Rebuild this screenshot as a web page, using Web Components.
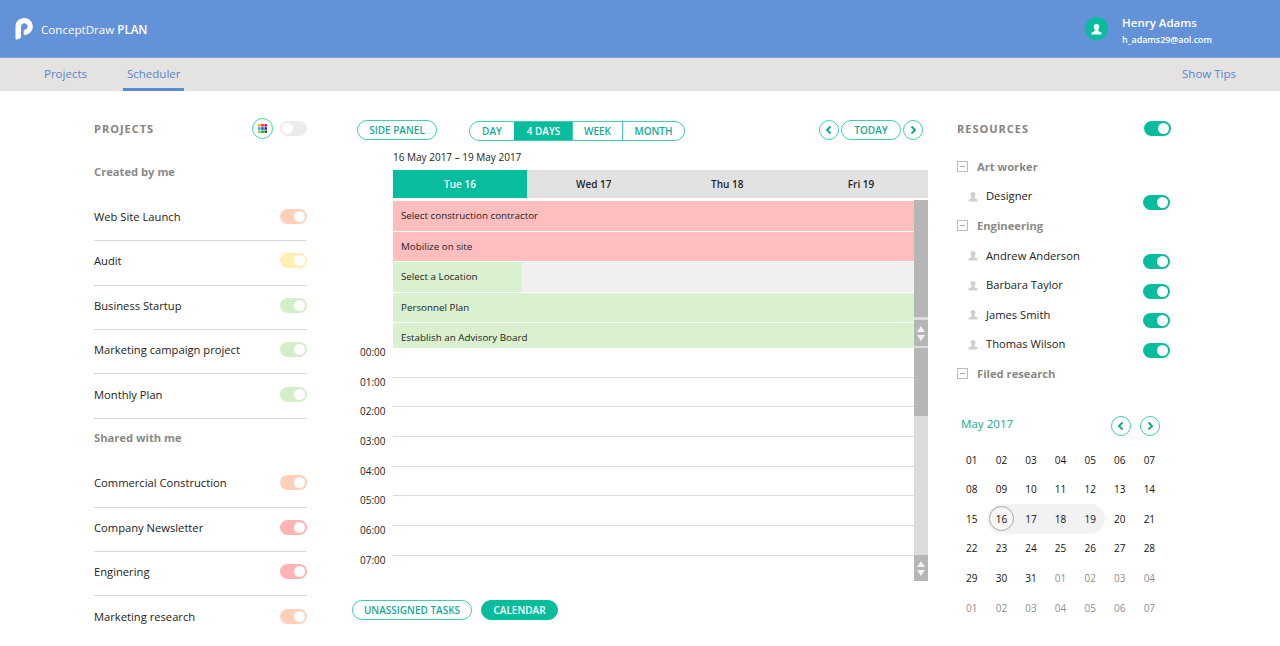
<!DOCTYPE html>
<html lang="en">
<head>
<meta charset="utf-8">
<title>ConceptDraw PLAN</title>
<style>
    html, body { margin: 0; height: 100%; overflow: hidden; background: #fff; }
    body { font-family: "Open Sans", "Liberation Sans", sans-serif; color: #222; }
</style>
</head>
<body>
<app-header></app-header>
<app-nav></app-nav>
<app-main>
    <project-panel></project-panel>
    <scheduler-view></scheduler-view>
    <resource-panel></resource-panel>
</app-main>

<script>
const TEAL = '#08bc9e';
const PERSON = '<path d="M6 0.500c-1.900 0-3 1.400-3 3.200 0 1.300.5 2.300 1.200 3v1.200C3.900 8.600 1 9 .6 10.200V12h10.800v-1.800C11 9 8.100 8.600 7.800 7.900V6.700c.7-.7 1.200-1.700 1.200-3 0-1.800-1.100-3.200-3-3.200z"/>';

class ToggleSwitch extends HTMLElement {
    constructor() {
        super();
        this.attachShadow({ mode: 'open' });
        this.shadowRoot.innerHTML = `
            <style>
                :host { display: inline-block; width: 27px; height: 15px; flex: none; border-radius: 8px; background: var(--on, #eee); position: relative; }
                i { position: absolute; top: 2px; right: 2px; width: 11px; height: 11px; border-radius: 50%; background: #fff; }
                :host([off]) i { right: auto; left: 2px; }
            </style>
            <i></i>`;
        if (this.hasAttribute('color')) this.style.setProperty('--on', this.getAttribute('color'));
    }
}
customElements.define('toggle-switch', ToggleSwitch);

class PillButton extends HTMLElement {
    constructor() {
        super();
        this.attachShadow({ mode: 'open' });
        this.shadowRoot.innerHTML = `
            <style>
                :host { display: inline-flex; align-items: center; justify-content: center; box-sizing: border-box; height: 20px; border: 1px solid #3fcdb5; border-radius: 10px; font: 600 10px "Open Sans", sans-serif; color: #12ab92; background: #fff; }
                :host([active]) { background: ${TEAL}; border-color: ${TEAL}; color: #fff; }
            </style>
            <slot></slot>`;
    }
}
customElements.define('pill-button', PillButton);

class RoundArrow extends HTMLElement {
    constructor() {
        super();
        this.attachShadow({ mode: 'open' });
        const d = this.getAttribute('dir') === 'next' ? 'M8.500 6.500l3.500 3.500-3.500 3.500' : 'M11.500 6.500L8 10l3.500 3.500';
        this.shadowRoot.innerHTML = `
            <style>
                :host { display: block; width: 20px; height: 20px; flex: none; }
                svg { display: block; }
            </style>
            <svg width="20" height="20" viewBox="0 0 20 20" fill="none">
                <circle cx="10" cy="10" r="9.500" stroke="#3fcdb5"/>
                <path d="${d}" stroke="#0aa88e" stroke-width="1.800"/>
            </svg>`;
    }
}
customElements.define('round-arrow', RoundArrow);

class AppHeader extends HTMLElement {
    constructor() {
        super();
        this.attachShadow({ mode: 'open' });
        this.shadowRoot.innerHTML = `
            <style>
                :host { display: flex; align-items: center; height: 58px; box-sizing: border-box; background: #6492d8; border-bottom: 1px solid #7fa5de; color: #fff; padding: 0 68px 0 15px; }
                .logo { display: block; margin-right: 8px; }
                .name { font-size: 11.600px; flex: 1; margin-top: 2px; }
                .name b { font-weight: 600; }
                .avatar { width: 23px; height: 23px; border-radius: 50%; background: ${TEAL}; display: flex; align-items: center; justify-content: center; margin-right: 14px; }
                .user { display: flex; flex-direction: column; margin-top: 5px; }
                .user b { font-weight: 600; font-size: 11.500px; line-height: 15px; }
                .user span { font-size: 8.900px; font-weight: 600; line-height: 16px; margin-top: 2px; }
            </style>
            <svg class="logo" width="18" height="22" viewBox="0 0 18 22">
                <path fill="#fff" d="M9.500 0C4 0 .5 3.500.5 9v11.500c0 .8.700 1.300 1.500 1 2.300-.4 4-1.200 4-3V9.300C6 7 7.300 5.300 9.300 5.300c1.900 0 3.200 1.400 3.200 3.200 0 1.700-1.100 3-2.700 3.300-.7.100-1.100.6-1.100 1.300v2.900c0 .8.500 1.100 1.200 1 4.500-.7 7.900-3.900 7.900-8.300C17.800 3.500 14.300 0 9.500 0z"/>
            </svg>
            <span class="name">ConceptDraw <b>PLAN</b></span>
            <span class="avatar"><svg width="11" height="12" viewBox="0 0 12 12" fill="#fff">${PERSON}</svg></span>
            <span class="user"><b>Henry Adams</b><span>h_adams29@aol.com</span></span>`;
    }
}
customElements.define('app-header', AppHeader);

class AppNav extends HTMLElement {
    constructor() {
        super();
        this.attachShadow({ mode: 'open' });
        this.shadowRoot.innerHTML = `
            <style>
                :host { display: flex; height: 33px; background: #e5e3e1; padding: 0 40px; font-size: 11.500px; color: #5585cf; }
                a { display: flex; align-items: center; padding: 0 4px 2px; box-sizing: border-box; }
                a.on { border-bottom: 3px solid #5b8ad6; margin-left: 32px; padding: 1px 4px 0; }
                .tips { margin-left: auto; }
            </style>
            <a>Projects</a><a class="on">Scheduler</a><a class="tips">Show Tips</a>`;
    }
}
customElements.define('app-nav', AppNav);

class AppMain extends HTMLElement {
    constructor() {
        super();
        this.attachShadow({ mode: 'open' });
        this.shadowRoot.innerHTML = `
            <style>
                :host { display: grid; grid-template-columns: 213px 621px 243px; padding: 29px 0 0 94px; }
            </style>
            <slot></slot>`;
    }
}
customElements.define('app-main', AppMain);

class ProjectPanel extends HTMLElement {
    constructor() {
        super();
        this.attachShadow({ mode: 'open' });
        const row = (name, color) => `<div class="row"><span>${name}</span><toggle-switch color="${color}"></toggle-switch></div>`;
        this.shadowRoot.innerHTML = `
            <style>
                :host { display: block; }
                h2 { display: flex; align-items: center; height: 16px; margin: 0 0 16.400px; font-size: 11px; font-weight: 700; letter-spacing: 1px; color: #85827f; }
                h2 span { flex: 1; }
                .grid { width: 21px; height: 21px; box-sizing: border-box; border: 1px solid #3fcdb5; border-radius: 50%; margin-right: 7px; display: flex; align-items: center; justify-content: center; }
                h3 { display: flex; align-items: center; height: 44.400px; box-sizing: border-box; padding-bottom: 6px; margin: 0; font-size: 11.200px; font-weight: 700; color: #8b8987; }
                .row { display: flex; align-items: center; justify-content: space-between; height: 44.400px; box-sizing: border-box; font-size: 11.200px; color: #222; border-bottom: 1px solid #d8d8d8; padding-bottom: 4px; }
                .row.last { border-bottom: 0; }
            </style>
            <h2><span>PROJECTS</span>
                <span class="grid" style="flex:none"><svg width="9" height="9" viewBox="0 0 9 9">
                    <rect width="2.600" height="2.600" fill="#f5a623"/><rect x="3.200" width="2.600" height="2.600" fill="#e53935"/><rect x="6.400" width="2.600" height="2.600" fill="#d81b60"/>
                    <rect y="3.200" width="2.600" height="2.600" fill="#29a9e1"/><rect x="3.200" y="3.200" width="2.600" height="2.600" fill="#1565c0"/><rect x="6.400" y="3.200" width="2.600" height="2.600" fill="#283593"/>
                    <rect y="6.400" width="2.600" height="2.600" fill="#9ccc2e"/><rect x="3.200" y="6.400" width="2.600" height="2.600" fill="#2e9e3f"/><rect x="6.400" y="6.400" width="2.600" height="2.600" fill="#1b6e35"/>
                </svg></span>
                <toggle-switch off color="#ececec"></toggle-switch>
            </h2>
            <h3>Created by me</h3>
            ${row('Web Site Launch', '#ffd0b8')}
            ${row('Audit', '#fff0b2')}
            ${row('Business Startup', '#d3efc8')}
            ${row('Marketing campaign project', '#d3efc8')}
            ${row('Monthly Plan', '#d3efc8')}
            <h3>Shared with me</h3>
            ${row('Commercial Construction', '#ffd0b8')}
            ${row('Company Newsletter', '#ffb3b5')}
            ${row('Enginering', '#ffb3b5')}
            <div class="row last"><span>Marketing research</span><toggle-switch color="#ffd0b8"></toggle-switch></div>`;
    }
}
customElements.define('project-panel', ProjectPanel);

class ScrollRail extends HTMLElement {
    constructor() {
        super();
        this.attachShadow({ mode: 'open' });
        this.shadowRoot.innerHTML = `
            <style>
                :host { display: flex; flex-direction: column; width: 14px; flex: none; box-sizing: border-box; background: #dcdcdc; }
                .thumb { background: #b6b6b6; height: var(--thumb, 68px); }
                .fill { flex: 1; }
                .btns { height: 26px; background: #b6b6b6; display: flex; flex-direction: column; align-items: center; justify-content: center; gap: 3px; }
                i { width: 0; height: 0; border-left: 4px solid transparent; border-right: 4px solid transparent; }
                .up { border-bottom: 6px solid #f2f2f2; }
                .down { border-top: 6px solid #f2f2f2; }
            </style>
            <div class="thumb"></div><div class="fill"></div>
            <div class="btns"><i class="up"></i><i class="down"></i></div>`;
        if (this.hasAttribute('thumb')) this.style.setProperty('--thumb', this.getAttribute('thumb') + 'px');
    }
}
customElements.define('scroll-rail', ScrollRail);

class SchedulerView extends HTMLElement {
    constructor() {
        super();
        this.attachShadow({ mode: 'open' });
        const hours = ['00', '01', '02', '03', '04', '05', '06', '07'];
        this.shadowRoot.innerHTML = `
            <style>
                :host { display: block; margin-left: 45px; width: 576px; }
                .bar { display: flex; align-items: center; height: 20px; padding: 0 5px; }
                .seg { display: flex; margin: 1px 0 0 32px; height: 20px; box-sizing: border-box; border: 1px solid #3fcdb5; border-radius: 10px; overflow: hidden; font-size: 10px; font-weight: 600; color: #12ab92; }
                .seg span { display: flex; align-items: center; justify-content: center; border-left: 1px solid #3fcdb5; box-sizing: border-box; }
                .seg span:first-child { border-left: 0; }
                .seg .on { background: ${TEAL}; color: #fff; border-color: ${TEAL}; }
                .nav { margin-left: auto; display: flex; align-items: center; gap: 2px; }
                .date { height: 30px; box-sizing: border-box; padding: 8px 0 0 41px; font-size: 10px; line-height: 18px; }
                .days { display: grid; grid-template-columns: 134px 133.500px 133.500px 1fr; margin-left: 41px; height: 28px; background: #e2e2e2; font-size: 10px; font-weight: 600; }
                .days span { display: flex; align-items: center; justify-content: center; }
                .days .on { background: ${TEAL}; color: #fff; }
                .tasks { display: flex; margin: 2px 0 0 41px; height: 148px; overflow: hidden; }
                .list { flex: 1; display: flex; flex-direction: column; gap: 1px; padding-top: 1px; overflow: hidden; }
                .task { height: 29.500px; flex: none; display: flex; align-items: center; font-size: 9.800px; background: #d9f1cf; }
                .task span { padding-left: 8px; }
                .red { background: #ffbdbd; }
                .part { background: #f0f0f0; }
                .part span { display: flex; align-items: center; height: 100%; width: 121px; background: #d9f1cf; }
                .hours { display: flex; height: 233px; }
                .labels { width: 41px; flex: none; font-size: 10px; }
                .labels div { height: 29.700px; padding-left: 8px; box-sizing: border-box; line-height: 10px; position: relative; top: -1px; }
                .lines { flex: 1; }
                .lines div { height: 29.700px; box-sizing: border-box; border-bottom: 1px solid #dcdcdc; }
                .lines div:last-child { border: 0; }
                .foot { display: flex; gap: 9px; margin-top: 19px; }
            </style>
            <div class="bar">
                <pill-button style="width:80px">SIDE PANEL</pill-button>
                <div class="seg">
                    <span style="width:44px">DAY</span>
                    <span class="on" style="width:58px">4 DAYS</span>
                    <span style="width:50px">WEEK</span>
                    <span style="width:62px">MONTH</span>
                </div>
                <div class="nav">
                    <round-arrow dir="prev"></round-arrow>
                    <pill-button style="width:60px">TODAY</pill-button>
                    <round-arrow dir="next"></round-arrow>
                </div>
            </div>
            <div class="date">16 May 2017 – 19 May 2017</div>
            <div class="days"><span class="on">Tue 16</span><span>Wed 17</span><span>Thu 18</span><span>Fri 19</span></div>
            <div class="tasks">
                <div class="list">
                    <div class="task red"><span>Select construction contractor</span></div>
                    <div class="task red"><span>Mobilize on site</span></div>
                    <div class="task part"><span>Select a Location</span></div>
                    <div class="task"><span>Personnel Plan</span></div>
                    <div class="task"><span>Establish an Advisory Board</span></div>
                </div>
                <scroll-rail thumb="117" style="padding-bottom:2px"></scroll-rail>
            </div>
            <div class="hours">
                <div class="labels">${hours.map(h => `<div>${h}:00</div>`).join('')}</div>
                <div class="lines">${hours.map(() => '<div></div>').join('')}</div>
                <scroll-rail thumb="68"></scroll-rail>
            </div>
            <div class="foot">
                <pill-button style="width:120px">UNASSIGNED TASKS</pill-button>
                <pill-button active style="width:77px">CALENDAR</pill-button>
            </div>`;
    }
}
customElements.define('scheduler-view', SchedulerView);

class MiniCalendar extends HTMLElement {
    constructor() {
        super();
        this.attachShadow({ mode: 'open' });
        const pad = n => String(n).padStart(2, '0');
        const cells = [];
        for (let d = 1; d <= 31; d++) cells.push(`<span class="${d >= 16 && d <= 19 ? 'sel' : ''}${d === 16 ? ' first' : ''}${d === 19 ? ' end' : ''}">${d === 16 ? '<em>16</em>' : pad(d)}</span>`);
        for (let d = 1; d <= 4; d++) cells.push(`<span class="dim">${pad(d)}</span>`);
        for (let d = 1; d <= 7; d++) cells.push(`<span class="dim">${pad(d)}</span>`);
        this.shadowRoot.innerHTML = `
            <style>
                :host { display: block; }
                .head { display: flex; align-items: center; height: 20px; width: 203px; padding-left: 4px; box-sizing: border-box; }
                .head b { font-weight: 400; font-size: 11.600px; color: #12ab92; flex: 1; margin-top: -4px; }
                .head round-arrow { margin-left: 9px; }
                .cal { display: grid; grid-template-columns: repeat(7, 29.600px); grid-auto-rows: 29.600px; margin-top: 9px; font-size: 10px; color: #111; }
                .cal span { display: flex; align-items: center; justify-content: center; }
                .sel { background: #f2f2f2; }
                .first { border-radius: 15px 0 0 15px; }
                .end { border-radius: 0 15px 15px 0; }
                em { font-style: normal; display: flex; align-items: center; justify-content: center; width: 25px; height: 25px; box-sizing: border-box; border: 1px solid #a8a8a8; border-radius: 50%; background: #f7f7f7; }
                .dim { color: #8f8f8f; }
            </style>
            <div class="head"><b>May 2017</b><round-arrow dir="prev"></round-arrow><round-arrow dir="next"></round-arrow></div>
            <div class="cal">${cells.join('')}</div>`;
    }
}
customElements.define('mini-calendar', MiniCalendar);

class ResourcePanel extends HTMLElement {
    constructor() {
        super();
        this.attachShadow({ mode: 'open' });
        const group = name => `<div class="group"><i></i><span>${name}</span></div>`;
        const person = name => `<div class="person"><svg width="10" height="11" viewBox="0 0 12 12" fill="#cfcfcf">${PERSON}</svg><span>${name}</span><toggle-switch color="${TEAL}"></toggle-switch></div>`;
        this.shadowRoot.innerHTML = `
            <style>
                :host { display: block; margin-left: 29px; width: 214px; }
                h2 { display: flex; align-items: center; justify-content: space-between; height: 16px; margin: 0 0 16px; font-size: 11px; font-weight: 700; letter-spacing: 1px; color: #85827f; }
                .group, .person { display: flex; align-items: center; height: 29.600px; }
                .group { font-size: 11.200px; font-weight: 700; color: #8b8987; }
                .group i { width: 11px; height: 11px; box-sizing: border-box; border: 1px solid #bbb; margin-right: 9px; position: relative; }
                .group i::after { content: ''; position: absolute; left: 2px; right: 2px; top: 4px; height: 1px; background: #aaa; }
                .person { font-size: 11.200px; padding-left: 11px; }
                .person span { margin: 0 0 1px 8px; flex: 1; }
                .person toggle-switch { margin: 12px 0 0; }
                .list { width: 213px; }
                mini-calendar { margin-top: 27px; }
            </style>
            <h2><span>RESOURCES</span><toggle-switch color="${TEAL}"></toggle-switch></h2>
            <div class="list">
                ${group('Art worker')}
                ${person('Designer')}
                ${group('Engineering')}
                ${person('Andrew Anderson')}
                ${person('Barbara Taylor')}
                ${person('James Smith')}
                ${person('Thomas Wilson')}
                ${group('Filed research')}
            </div>
            <mini-calendar></mini-calendar>`;
    }
}
customElements.define('resource-panel', ResourcePanel);
</script>
</body>
</html>
